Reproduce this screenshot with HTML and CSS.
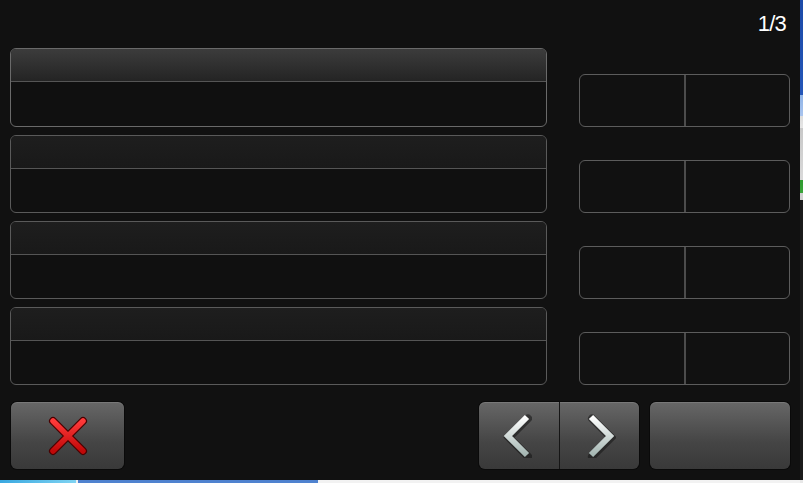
FILE: index.html
```html
<!DOCTYPE html>
<html lang="en">
<head>
    <meta charset="UTF-8">
    <meta name="viewport" content="width=device-width, initial-scale=1.0">
    <title>Page 1/3</title>
    <link rel="stylesheet" href="styles.css">
</head>
<body>
    <div class="screen">
        <div class="top-bar">
            <span class="page-count">1/3</span>
        </div>

        <div class="slots">
            <div class="panel active">
                <div class="panel-head"></div>
                <div class="panel-body"></div>
            </div>
            <div class="pair">
                <div class="pair-cell"></div>
                <div class="pair-cell"></div>
            </div>

            <div class="panel">
                <div class="panel-head"></div>
                <div class="panel-body"></div>
            </div>
            <div class="pair">
                <div class="pair-cell"></div>
                <div class="pair-cell"></div>
            </div>

            <div class="panel">
                <div class="panel-head"></div>
                <div class="panel-body"></div>
            </div>
            <div class="pair">
                <div class="pair-cell"></div>
                <div class="pair-cell"></div>
            </div>

            <div class="panel">
                <div class="panel-head"></div>
                <div class="panel-body"></div>
            </div>
            <div class="pair">
                <div class="pair-cell"></div>
                <div class="pair-cell"></div>
            </div>
        </div>

        <div class="actions">
            <button class="btn btn-cancel" aria-label="Cancel">
                <svg width="40" height="40" viewBox="0 0 40 40">
                    <defs>
                        <linearGradient id="xRed" x1="0" y1="0" x2="0" y2="1">
                            <stop offset="0" stop-color="#ff3a3a"/>
                            <stop offset="1" stop-color="#c00808"/>
                        </linearGradient>
                    </defs>
                    <path d="M5 5 L35 35 M35 5 L5 35" stroke="#4a0000" stroke-width="8" stroke-linecap="round" fill="none"/>
                    <path d="M5 5 L35 35 M35 5 L5 35" stroke="url(#xRed)" stroke-width="5.5" stroke-linecap="round" fill="none"/>
                </svg>
            </button>

            <div class="nav-group">
                <button class="btn nav-btn nav-prev" aria-label="Previous">
                    <svg width="30" height="44" viewBox="0 0 30 44">
                        <defs>
                            <linearGradient id="chev" x1="0" y1="0" x2="0" y2="1">
                                <stop offset="0" stop-color="#ffffff"/>
                                <stop offset="1" stop-color="#a4b6b2"/>
                            </linearGradient>
                        </defs>
                        <path d="M25 3 L6 22 L25 41" stroke="#141414" stroke-width="8" stroke-linecap="round" fill="none" opacity="0.55" transform="translate(1 1.5)"/>
                        <path d="M25 3 L6 22 L25 41" stroke="url(#chev)" stroke-width="6" fill="none"/>
                    </svg>
                </button>
                <button class="btn nav-btn nav-next" aria-label="Next">
                    <svg width="30" height="44" viewBox="0 0 30 44">
                        <path d="M5 3 L24 22 L5 41" stroke="#141414" stroke-width="8" stroke-linecap="round" fill="none" opacity="0.55" transform="translate(1 1.5)"/>
                        <path d="M5 3 L24 22 L5 41" stroke="url(#chev)" stroke-width="6" fill="none"/>
                    </svg>
                </button>
            </div>

            <button class="btn btn-confirm" aria-label="Confirm"></button>
        </div>
    </div>

    <div class="desk-edge"></div>
    <div class="taskbar">
        <div class="task-start"></div>
        <div class="task-item"></div>
    </div>
    <div class="corner"></div>
</body>
</html>
```

FILE: styles.css
```css
body {
    margin: 0;
    padding: 0;
    width: 803px;
    height: 483px;
    overflow: hidden;
    display: grid;
    grid-template-columns: 800px 3px;
    grid-template-rows: 480px 3px;
    background: #111;
    font-family: "Liberation Sans", Arial, sans-serif;
}

.screen {
    background: #111111;
    display: flex;
    flex-direction: column;
    padding: 0 10px 0 10px;
}

.top-bar {
    height: 48px;
    display: flex;
    justify-content: flex-end;
    align-items: flex-start;
}

.page-count {
    color: #ffffff;
    font-size: 22px;
    margin-top: 11px;
    margin-right: 4px;
    letter-spacing: -0.8px;
}

.slots {
    display: grid;
    grid-template-columns: 537px 211px;
    grid-template-rows: 79px repeat(3, 78px);
    column-gap: 32px;
    row-gap: 8px;
}

.panel {
    border: 1px solid #5a5a5a;
    border-radius: 6px;
    overflow: hidden;
    display: flex;
    flex-direction: column;
    box-sizing: border-box;
    background: #101010;
}

.panel-head {
    height: 32px;
    border-bottom: 1px solid #555;
    background: linear-gradient(#1e1e1e, #191919);
}

.panel.active .panel-head {
    background: linear-gradient(#3c3c3c, #242424);
}

.panel.active {
    border-color: #6a6a6a;
}

.panel-body {
    flex: 1;
}

.pair {
    align-self: end;
    height: 53px;
    display: flex;
    border: 1px solid #5c5c5c;
    border-radius: 6px;
    box-sizing: border-box;
}

.pair-cell {
    flex: 1;
}

.pair-cell + .pair-cell {
    border-left: 2px solid #4c4c4c;
}

.actions {
    margin-top: 17px;
    height: 67px;
    display: flex;
    gap: 11px;
}

.btn {
    border: none;
    padding: 0;
    margin: 0;
    border-radius: 6px;
    background: linear-gradient(#676767, #454545 60%, #393939);
    box-shadow: 0 0 0 1px #0a0a0a, inset 0 1px 0 rgba(255, 255, 255, 0.12);
    display: flex;
    justify-content: center;
    align-items: center;
    cursor: pointer;
}

.btn-cancel {
    width: 113px;
    margin-left: 1px;
}

.nav-group {
    margin-left: auto;
    width: 160px;
    display: flex;
    border-radius: 6px;
    box-shadow: 0 0 0 1px #0a0a0a;
}

.nav-btn {
    flex: 1;
    box-shadow: inset 0 1px 0 rgba(255, 255, 255, 0.12);
}

.nav-prev {
    border-radius: 6px 0 0 6px;
    border-right: 1px solid #151515;
    padding-right: 4px;
}

.nav-next {
    border-radius: 0 6px 6px 0;
    padding-left: 4px;
}

.btn-confirm {
    width: 140px;
}

.desk-edge {
    background: linear-gradient(#1c4aa8 0, #2456b8 95px, #8fb3e6 95px, #a9c4ee 116px, #dcdcdc 116px, #e6e6e6 128px, #c8c8c8 128px, #d9d9d9 180px, #2f9a2f 180px, #3aa43a 193px, #cfcfcf 193px, #cfcfcf 200px, #1b1b1b 200px);
}

.taskbar {
    display: flex;
    background: #f2f2f2;
}

.task-start {
    width: 76px;
    background: linear-gradient(90deg, #3aa8e0, #7fd3f2);
    border-right: 2px solid #f0f0f0;
}

.task-item {
    width: 240px;
    background: #4f82cf;
}

.corner {
    background: #e8e8e8;
}
```
